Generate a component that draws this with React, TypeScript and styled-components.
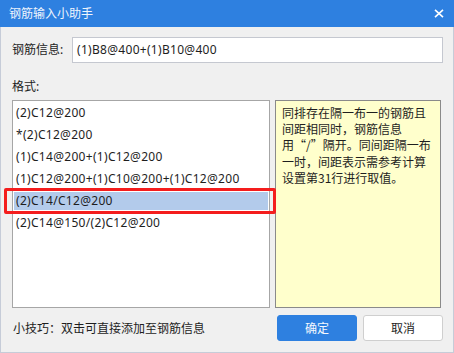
import React from "react";
import styled, { createGlobalStyle } from "styled-components";

const GlobalStyle = createGlobalStyle`
  html, body {
    margin: 0;
    padding: 0;
    background: #f0f0f0;
  }
  * {
    box-sizing: border-box;
  }
`;

const FONT = `"Microsoft YaHei", "Noto Sans", "Noto Sans CJK SC", sans-serif`;
const CJK_FONT = `"Noto Sans CJK SC", "Noto Sans", sans-serif`;

const Dialog = styled("div")`
  width: 454px;
  height: 353px;
  display: flex;
  flex-direction: column;
  background: #f0f0f0;
  border: 1px solid #c6ccd8;
  border-top: none;
  font-family: ${FONT};
  font-size: 12px;
  color: #1e1e1e;
`;

const TitleBar = styled("div")`
  height: 27px;
  flex: 0 0 27px;
  margin: 0 -1px;
  background: #2e80e0;
  display: flex;
  align-items: center;
  justify-content: space-between;
  padding: 0 9px 0 9px;
  color: #eef4fd;
`;

const Title = styled("span")`
  font-size: 12px;
  line-height: 16px;
`;

const CloseButton = styled("span")`
  display: flex;
  align-items: center;
  justify-content: center;
  width: 10px;
  height: 10px;
  margin-right: 1px;
`;

const Body = styled("div")`
  flex: 1;
  display: flex;
  flex-direction: column;
  padding: 10px 10px 0 11px;
`;

const InfoRow = styled("div")`
  display: flex;
  align-items: center;
  height: 26px;
`;

const Label = styled("span")`
  width: 60px;
  line-height: 16px;
`;

const TextInput = styled("div")`
  flex: 1;
  height: 26px;
  background: #fff;
  border: 1px solid #c5c8d0;
  display: flex;
  align-items: center;
  padding-left: 4px;
  line-height: 16px;
  letter-spacing: 0.3px;
`;

const SectionLabel = styled("div")`
  margin-top: 16px;
  line-height: 16px;
  height: 16px;
`;

const Panels = styled("div")`
  margin-top: 5px;
  display: flex;
  gap: 5px;
  height: 208px;
`;

const ListBox = styled("div")`
  width: 258px;
  height: 100%;
  background: #fff;
  border: 1px solid #a6a6a6;
  padding-top: 1px;
`;

const ListRow = styled("div")<{ $selected?: boolean }>`
  position: relative;
  height: 18px;
  margin: 2px 1px 4px 1px;
  padding-left: 2px;
  display: flex;
  align-items: center;
  line-height: 16px;
  letter-spacing: 0.3px;
  background: ${(p) => (p.$selected ? "#b3cbeb" : "transparent")};
`;

const Marker = styled("div")`
  position: absolute;
  left: -10px;
  right: -8px;
  top: -4px;
  bottom: -4px;
  border: 3px solid #f41d1d;
  border-radius: 2px;
  pointer-events: none;
`;

const TipBox = styled("div")`
  width: 166px;
  height: 100%;
  background: #ffffcc;
  border: 1px solid #8a8a8a;
  padding: 4px 4px 0 6px;
  line-height: 16.2px;
  font-family: ${CJK_FONT};
`;

const TipLine = styled("div")`
  white-space: nowrap;
`;

const Footer = styled("div")`
  margin-top: 7px;
  display: flex;
  align-items: center;
  height: 26px;
`;

const Hint = styled("span")`
  flex: 1;
  line-height: 16px;
  padding-left: 1px;
  font-family: ${CJK_FONT};
`;

const Button = styled("button")<{ $primary?: boolean }>`
  width: 80px;
  height: 26px;
  margin-left: 6px;
  border-radius: 3px;
  font-family: ${FONT};
  font-size: 12px;
  cursor: pointer;
  border: 1px solid ${(p) => (p.$primary ? "#2e80e0" : "#cfcfcf")};
  background: ${(p) => (p.$primary ? "#2e80e0" : "#fff")};
  color: ${(p) => (p.$primary ? "#f4f8fe" : "#1e1e1e")};
  padding: 0;
`;

const formats = [
  "(2)C12@200",
  "*(2)C12@200",
  "(1)C14@200+(1)C12@200",
  "(1)C12@200+(1)C10@200+(1)C12@200",
  "(2)C14/C12@200",
  "(2)C14@150/(2)C12@200",
];

const tipLines = [
  "同排存在隔一布一的钢筋且",
  "间距相同时，钢筋信息",
  "用“/”隔开。同间距隔一布",
  "一时，间距表示需参考计算",
  "设置第31行进行取值。",
];

export default function App() {
  return (
    <>
      <GlobalStyle />
      <Dialog>
        <TitleBar>
          <Title>钢筋输入小助手</Title>
          <CloseButton>
            <svg width="10" height="9" viewBox="0 0 10 9">
              <path d="M1 0.8 L9 8.2 M9 0.8 L1 8.2" stroke="#fff" strokeWidth="1.6" />
            </svg>
          </CloseButton>
        </TitleBar>
        <Body>
          <InfoRow>
            <Label>钢筋信息:</Label>
            <TextInput>(1)B8@400+(1)B10@400</TextInput>
          </InfoRow>
          <SectionLabel>格式:</SectionLabel>
          <Panels>
            <ListBox>
              {formats.map((f, i) => (
                <ListRow key={f} $selected={i === 4}>
                  {f}
                  {i === 4 && <Marker />}
                </ListRow>
              ))}
            </ListBox>
            <TipBox>
              {tipLines.map((l) => (
                <TipLine key={l}>{l}</TipLine>
              ))}
            </TipBox>
          </Panels>
          <Footer>
            <Hint>小技巧：双击可直接添加至钢筋信息</Hint>
            <Button $primary>确定</Button>
            <Button>取消</Button>
          </Footer>
        </Body>
      </Dialog>
    </>
  );
}
